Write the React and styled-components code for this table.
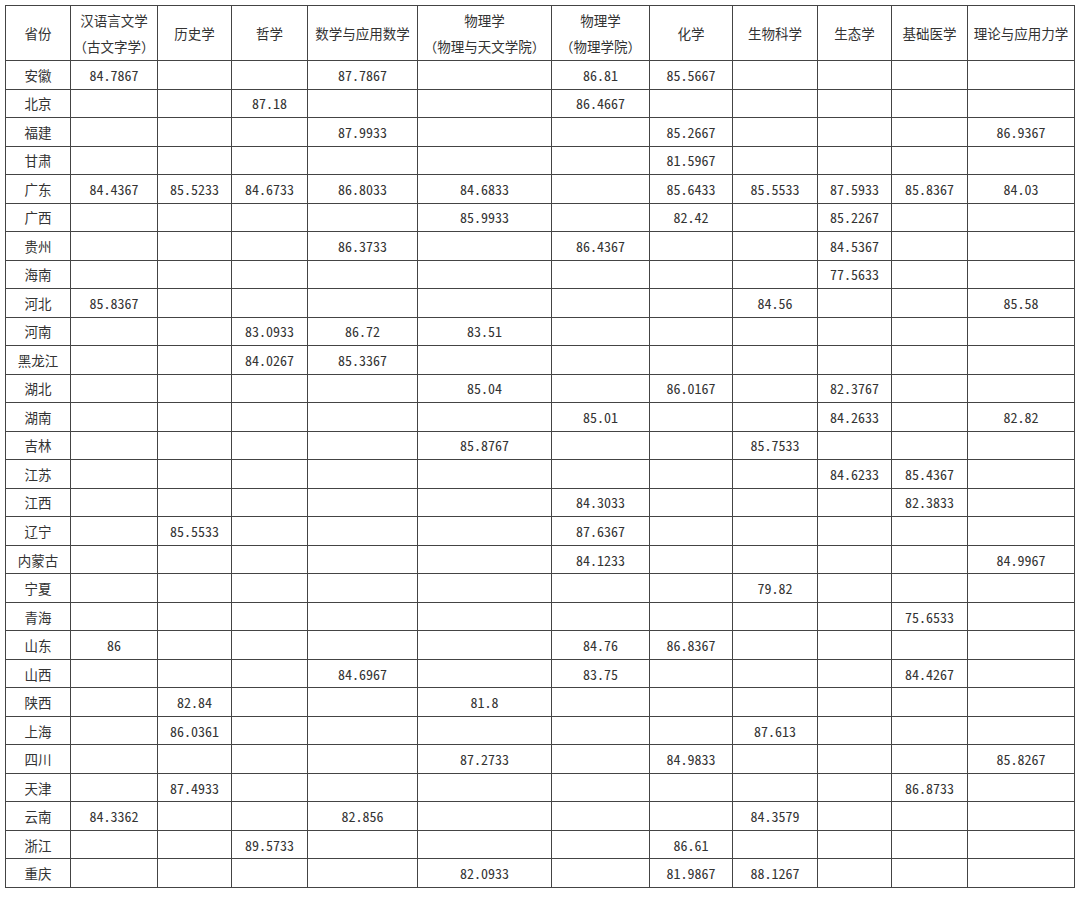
import React from "react";
import styled, { createGlobalStyle } from "styled-components";

const Global = createGlobalStyle`
  html, body { margin: 0; padding: 0; background: #fff; }
  body { font-family: "Noto Sans CJK SC", "Noto Sans", sans-serif; color: #333; }
`;

const Page = styled.div`
  padding: 5px 0 0 5px;
`;

const Table = styled.table`
  border-collapse: collapse;
  table-layout: fixed;
  width: 1069px;
`;

const HeadRow = styled.tr`
  height: 55px;
`;

const BodyRow = styled.tr`
  height: 28.52px;
`;

const HeadCell = styled.th`
  border: 1.3px solid #444;
  padding: 0;
  font-weight: 400;
  font-size: 13.5px;
  line-height: 26px;
  text-align: center;
  vertical-align: middle;
  color: #333;
  white-space: nowrap;
  text-spacing-trim: space-all;
`;

const Paren = styled.span`
  display: inline-block;
  width: 1em;
  text-align: center;
  font-family: "Noto Sans CJK TC", "Noto Sans CJK SC", sans-serif;
`;

const Cell = styled.td`
  border: 1.3px solid #444;
  padding: 0;
  text-align: center;
  vertical-align: middle;
  color: #333;
  font-size: ${(p) => (p.$name ? "13.5px" : "14px")};
  font-family: ${(p) =>
    p.$name
      ? '"Noto Sans CJK SC", sans-serif'
      : '"Noto Sans Mono CJK SC", "Liberation Mono", "DejaVu Sans Mono", monospace'};
  line-height: 16px;
`;

const widths = [65, 87, 74, 76, 110, 134, 98, 83, 85, 74, 76, 107];

const headers = [
  ["省份"],
  ["汉语言文学", "（古文字学）"],
  ["历史学"],
  ["哲学"],
  ["数学与应用数学"],
  ["物理学", "（物理与天文学院）"],
  ["物理学", "（物理学院）"],
  ["化学"],
  ["生物科学"],
  ["生态学"],
  ["基础医学"],
  ["理论与应用力学"],
];

const raw = `安徽|84.7867|||87.7867||86.81|85.5667||||
北京|||87.18|||86.4667|||||
福建||||87.9933|||85.2667||||86.9367
甘肃|||||||81.5967||||
广东|84.4367|85.5233|84.6733|86.8033|84.6833||85.6433|85.5533|87.5933|85.8367|84.03
广西|||||85.9933||82.42||85.2267||
贵州||||86.3733||86.4367|||84.5367||
海南|||||||||77.5633||
河北|85.8367|||||||84.56|||85.58
河南|||83.0933|86.72|83.51||||||
黑龙江|||84.0267|85.3367|||||||
湖北|||||85.04||86.0167||82.3767||
湖南||||||85.01|||84.2633||82.82
吉林|||||85.8767|||85.7533|||
江苏|||||||||84.6233|85.4367|
江西||||||84.3033||||82.3833|
辽宁||85.5533||||87.6367|||||
内蒙古||||||84.1233|||||84.9967
宁夏||||||||79.82|||
青海||||||||||75.6533|
山东|86|||||84.76|86.8367||||
山西||||84.6967||83.75||||84.4267|
陕西||82.84|||81.8||||||
上海||86.0361||||||87.613|||
四川|||||87.2733||84.9833||||85.8267
天津||87.4933||||||||86.8733|
云南|84.3362|||82.856||||84.3579|||
浙江|||89.5733||||86.61||||
重庆|||||82.0933||81.9867|88.1267|||`;

const rows = raw.split("\n").map((l) => l.split("|"));

function HeadLine({ text }) {
  if (text.startsWith("（") && text.endsWith("）")) {
    return (
      <div>
        <Paren>（</Paren>
        {text.slice(1, -1)}
        <Paren>）</Paren>
      </div>
    );
  }
  return <div>{text}</div>;
}

export default function App() {
  return (
    <>
      <Global />
      <Page>
        <Table>
          <colgroup>
            {widths.map((w, i) => (
              <col key={i} style={{ width: w }} />
            ))}
          </colgroup>
          <thead>
            <HeadRow>
              {headers.map((h, i) => (
                <HeadCell key={i}>
                  {h.map((line, j) => (
                    <HeadLine key={j} text={line} />
                  ))}
                </HeadCell>
              ))}
            </HeadRow>
          </thead>
          <tbody>
            {rows.map((r, i) => (
              <BodyRow key={i}>
                {r.map((v, j) => (
                  <Cell key={j} $name={j === 0}>
                    {v}
                  </Cell>
                ))}
              </BodyRow>
            ))}
          </tbody>
        </Table>
      </Page>
    </>
  );
}
